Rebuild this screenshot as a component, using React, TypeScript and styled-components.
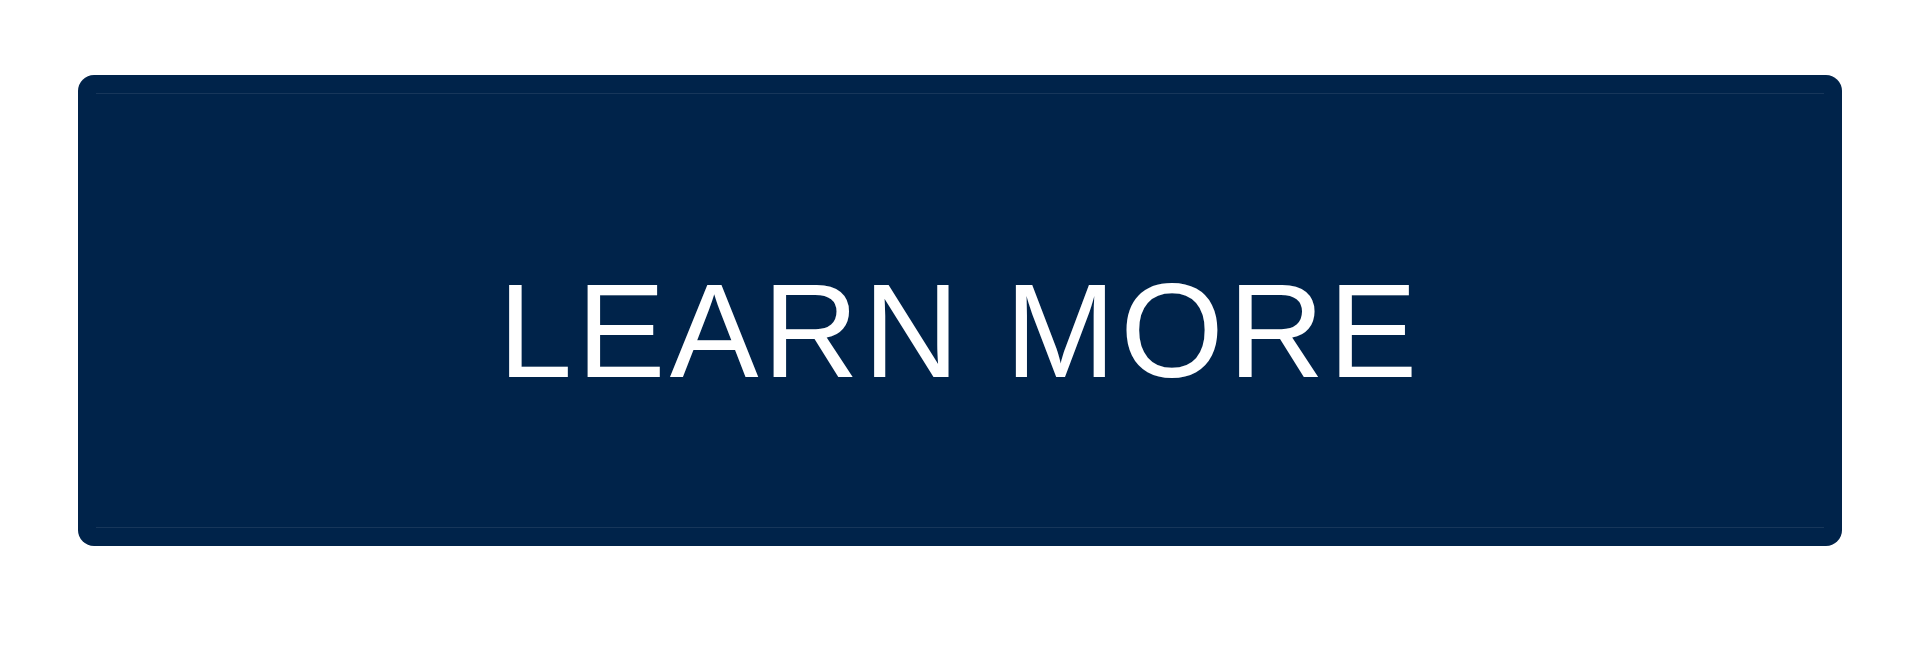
import styled, { createGlobalStyle } from "styled-components";

const GlobalStyle = createGlobalStyle`
  html, body {
    margin: 0;
    padding: 0;
    background: #ffffff;
  }
`;

const Page = styled.div`
  width: 1920px;
  height: 649px;
  box-sizing: border-box;
  padding: 75px 78px 0 78px;
`;

const CtaButton = styled.a`
  display: flex;
  width: 1764px;
  height: 471px;
  box-sizing: border-box;
  padding: 18px;
  background: #00234a;
  border-radius: 16px;
  text-decoration: none;
  cursor: pointer;
`;

// thin highlight rules along the top and bottom of the face
const Face = styled.div`
  flex: 1;
  display: flex;
  align-items: center;
  justify-content: center;
  border-top: 1px solid rgba(255, 255, 255, 0.09);
  border-bottom: 1px solid rgba(255, 255, 255, 0.09);
  padding-top: 42px;
`;

const Label = styled.span`
  font-family: "Liberation Sans", Arial, sans-serif;
  font-size: 133px;
  line-height: 1;
  letter-spacing: 4.4px;
  color: #ffffff;
  white-space: nowrap;
`;

export default function App() {
  return (
    <>
      <GlobalStyle />
      <Page>
        <CtaButton>
          <Face>
            <Label>LEARN MORE</Label>
          </Face>
        </CtaButton>
      </Page>
    </>
  );
}
